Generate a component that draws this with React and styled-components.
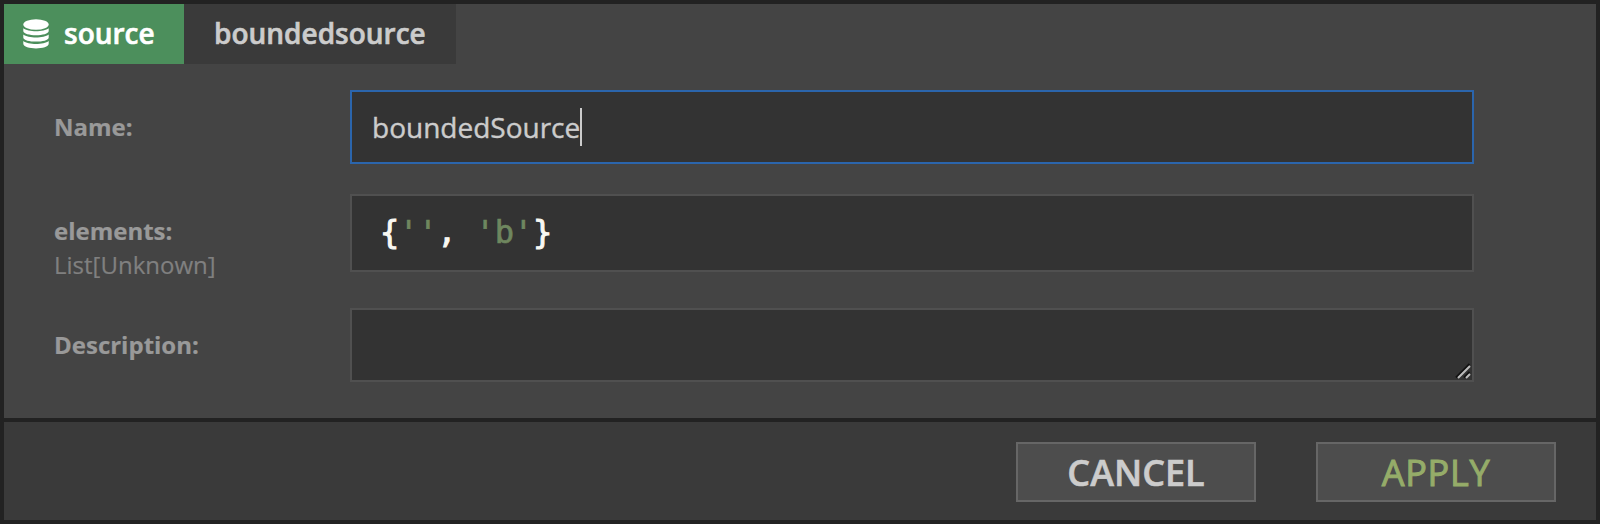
import React from "react";
import styled, { createGlobalStyle } from "styled-components";

const GlobalStyle = createGlobalStyle`
  * { box-sizing: border-box; }
  body { margin: 0; background: #222; }
`;

const Dialog = styled.div`
  display: flex;
  flex-direction: column;
  width: 1600px;
  height: 524px;
  padding: 4px;
  gap: 4px;
  background: #222;
  font-family: "Open Sans", sans-serif;
  color: #ccc;
`;

const Body = styled.main`
  height: 414px;
  background: #444;
`;

const Tabs = styled.header`
  display: flex;
  height: 60px;
`;

const Tab = styled.div`
  display: flex;
  align-items: center;
  width: ${(p) => p.$width}px;
  padding: 0 0 1px ${(p) => p.$inset}px;
  background: ${(p) => (p.$active ? "#4c8f5c" : "#3a3a3a")};
  color: ${(p) => (p.$active ? "#fff" : "#ccc")};
  font-size: 28px;
  font-weight: 600;
  line-height: 37px;
  -webkit-text-stroke: 0.6px currentColor;
`;

const DatabaseIcon = styled.svg`
  width: 26px;
  height: 30px;
  margin-right: 15px;
  fill: #fff;
`;

const Form = styled.form`
  padding: 26px 122px 0 50px;
`;

const Row = styled.div`
  display: flex;
  margin-bottom: ${(p) => p.$gap || 0}px;
`;

const LabelColumn = styled.label`
  width: 296px;
  padding-top: 20px;
  font-size: 24px;
  line-height: 34px;
  font-weight: 700;
  color: #999;
  -webkit-text-stroke: 0.2px currentColor;
`;

const TypeHint = styled.span`
  display: block;
  font-weight: 400;
  color: #808080;
`;

const Field = styled.div`
  position: relative;
  display: flex;
  flex: 1;
  height: ${(p) => p.$height}px;
  padding: 16px 20px;
  border: 2px solid ${(p) => (p.$focused ? "#2b65ac" : "#505050")};
  background: #333;
  font-size: 28px;
  line-height: 38px;
  -webkit-text-stroke: 0.4px currentColor;
`;

const Caret = styled.span`
  width: 2px;
  height: 38px;
  background: #ccc;
`;

const Code = styled.code`
  padding: 1px 0 0 8px;
  font-family: "DejaVu Sans Mono", monospace;
  font-size: 32px;
  letter-spacing: -0.16px;
  white-space: pre;
  color: #f8f8f2;
  -webkit-text-stroke: 1px currentColor;
`;

const StringToken = styled.span`
  color: #6f875f;
  -webkit-text-stroke: 0.7px currentColor;
`;

const Grip = styled.svg`
  position: absolute;
  right: 0;
  bottom: 0;
  width: 18px;
  height: 18px;
`;

const Footer = styled.footer`
  display: flex;
  justify-content: flex-end;
  gap: 60px;
  height: 98px;
  padding: 20px 40px 0 0;
  background: #3a3a3a;
`;

const Button = styled.button`
  width: 240px;
  height: 60px;
  padding: 2px 0 0;
  border: 2px solid #666;
  background: #4d4d4d;
  color: ${(p) => (p.$primary ? "#95ac69" : "#ccc")};
  font: ${(p) => (p.$primary ? 400 : 600)} 36px/50px "Open Sans", sans-serif;
  letter-spacing: ${(p) => (p.$primary ? 0.7 : 0)}px;
  -webkit-text-stroke: ${(p) => (p.$primary ? 1 : 0.6)}px currentColor;
`;

export default function App() {
  return (
    <Dialog>
      <GlobalStyle />
      <Body>
        <Tabs>
          <Tab $active $width={180} $inset={19}>
            <DatabaseIcon viewBox="0 0 26 30">
              <ellipse cx="13" cy="5.5" rx="12.7" ry="5.3" />
              <path d="M.3 9.2C5 13.2 21 13.2 25.7 9.2V12C25.7 17.6.3 17.6.3 12Z" />
              <path d="M.3 15.6C5 19.6 21 19.6 25.7 15.6V18.4C25.7 24 .3 24 .3 18.4Z" />
              <path d="M.3 22C5 26 21 26 25.7 22V24.8C25.7 31 .3 31 .3 24.8Z" />
            </DatabaseIcon>
            source
          </Tab>
          <Tab $width={272} $inset={30}>boundedsource</Tab>
        </Tabs>
        <Form>
          <Row $gap={30}>
            <LabelColumn>Name:</LabelColumn>
            <Field $focused $height={74}>boundedSource<Caret /></Field>
          </Row>
          <Row $gap={26}>
            <LabelColumn>elements:<TypeHint>List[Unknown]</TypeHint></LabelColumn>
            <Field $height={78}>
              <Code>
                {"{"}<StringToken>''</StringToken>{", "}<StringToken>'b'</StringToken>{"}"}
              </Code>
            </Field>
          </Row>
          <Row>
            <LabelColumn>Description:</LabelColumn>
            <Field $height={74}>
              <Grip viewBox="0 0 18 18" fill="none">
                <path d="M2 15.5 15.5 2M10 15.5 15.5 10" stroke="#111" strokeWidth="2" />
                <path d="M4 16 16 4M12 16 16 12" stroke="#bbb" strokeWidth="2" />
              </Grip>
            </Field>
          </Row>
        </Form>
      </Body>
      <Footer>
        <Button>CANCEL</Button>
        <Button $primary>APPLY</Button>
      </Footer>
    </Dialog>
  );
}
